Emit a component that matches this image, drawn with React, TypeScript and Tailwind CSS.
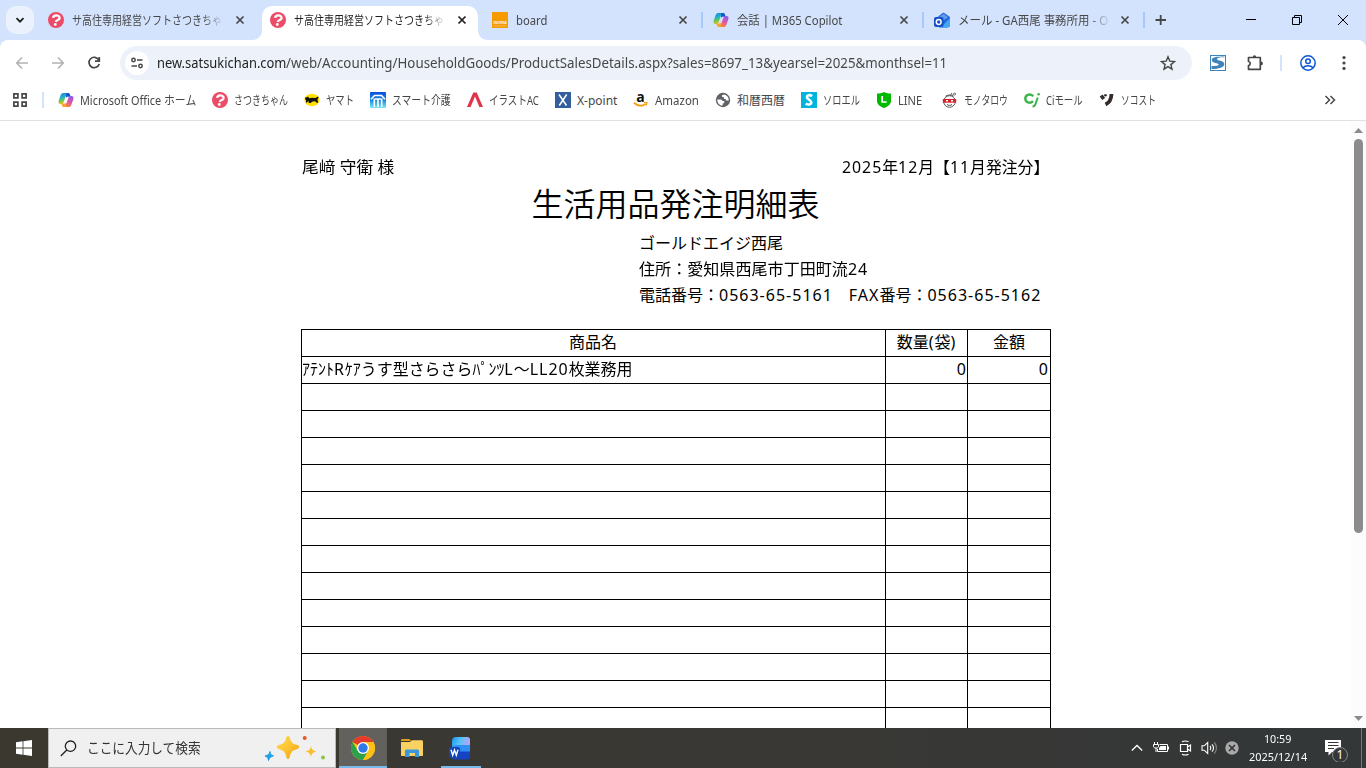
import { useLayoutEffect, useRef, useState, type ReactNode } from "react";

type FitProps = { children: ReactNode; className?: string };

// Condenses or stretches a single line of text to the width of its box
const FitText = ({ children, className = "" }: FitProps) => {
    const box = useRef<HTMLSpanElement>(null);
    const inner = useRef<HTMLSpanElement>(null);
    const [scale, setScale] = useState(1);

    useLayoutEffect(() => {
        if (!box.current || !inner.current) return;
        setScale(box.current.clientWidth / inner.current.offsetWidth);
    }, []);

    return (
        <span ref={box} className={`block shrink-0 whitespace-pre ${className}`}>
            <span ref={inner} className="inline-block origin-left" style={{ transform: `scaleX(${scale})` }}>
                {children}
            </span>
        </span>
    );
};

// Digits and Latin letters inside the Japanese sheet
const Latin = ({ children }: { children: ReactNode }) => <span className="tracking-[1px]">{children}</span>;

const SatsukiIcon = () => (
    <svg className="size-4 shrink-0" viewBox="0 0 16 16">
        <circle cx="8" cy="8" r="8" fill="#ee4b67" />
        <path d="M4.800 6.400C4.600 2.400 11.200 2.400 11.200 5.600c0 2.200-2.900 2-3.200 4.400" fill="none" stroke="#fff" strokeWidth="2.300" transform="rotate(10 8 8)" />
        <circle cx="7.300" cy="12.500" r="1.400" fill="#fff" />
    </svg>
);

const CopilotIcon = () => (
    <svg className="size-4 shrink-0" viewBox="0 0 16 16">
        <defs>
            <linearGradient id="cpA" x1="0" y1="0" x2="0.3" y2="1">
                <stop offset="0" stopColor="#1b7fe0" />
                <stop offset="0.45" stopColor="#22b3c9" />
                <stop offset="0.75" stopColor="#7ac943" />
                <stop offset="1" stopColor="#f2c01f" />
            </linearGradient>
            <linearGradient id="cpB" x1="0.7" y1="0" x2="0.3" y2="1">
                <stop offset="0" stopColor="#8a5cf0" />
                <stop offset="0.5" stopColor="#e0589f" />
                <stop offset="1" stopColor="#fb8a3c" />
            </linearGradient>
        </defs>
        <path d="M10.500 1H5.200C3.800 1 3 2.200 2.500 3.600L.6 9c-.5 1.700.4 3 1.900 3h2.400L7.500 5c.5-1.300 1-1.700 2.200-1.700h1.900z" fill="url(#cpA)" />
        <path d="M8.200 1h2c1 0 1.500.8 1.800 1.800l.7 2H9.700c-1 0-1.400.5-1.700 1.500z" fill="#1557c8" />
        <path d="M5.500 15h5.300c1.400 0 2.200-1.200 2.700-2.600l1.900-5.400c.5-1.700-.4-3-1.900-3h-2.400L8.500 11c-.5 1.300-1 1.700-2.200 1.700H4.400z" fill="url(#cpB)" />
        <path d="M7.800 15H5.700c-1 0-1.500-.8-1.800-1.800l-.6-1.700h3c1 0 1.400-.5 1.700-1.500z" fill="#f6a52d" />
    </svg>
);

const BoardIcon = () => (
    <svg className="size-4 shrink-0" viewBox="0 0 16 16">
        <rect width="16" height="16" fill="#f59a00" />
        <text x="1.500" y="11.800" fontSize="4.600" fontWeight="700" fill="#fff" fontFamily="Liberation Sans, sans-serif" textLength="13" lengthAdjust="spacingAndGlyphs">norma</text>
        <path d="M1.500 14h13" stroke="#f9c46b" strokeWidth=".8" />
    </svg>
);

const OutlookIcon = () => (
    <svg className="size-4 shrink-0" viewBox="0 0 16 16">
        <path d="M3 5.500 8.300 1.200c.8-.6 1.500-.6 2.300 0L15 4.300c.7.5 1 1 1 1.800V13c0 1.600-.9 2.500-2.500 2.500H5z" fill="#2563dd" />
        <path d="M4.500 5.500 9.500 1.700l4.800 3.500-5 3.200z" fill="#5d9bf2" />
        <path d="M16 6v7c0 1.600-.9 2.500-2.500 2.500H7z" fill="#3fa9f5" />
        <rect y="5" width="9.500" height="10" rx="2" fill="#1250c4" />
        <circle cx="4.700" cy="10" r="2.400" fill="none" stroke="#fff" strokeWidth="1.500" />
    </svg>
);

const YamatoIcon = () => (
    <svg className="size-4 shrink-0" viewBox="0 0 16 16">
        <ellipse cx="8" cy="8" rx="7.600" ry="6.200" fill="#ffe100" />
        <path d="M1.300 5 2.500 5.600 4 4.600l1.300 1.700 2.700-.6 3.500.3L14 4.600l.6 1-1.200 1.900.8 3.300h-1.500l-1.400-1.500-2.800.3L6.500 11H4.500l.5-1.300L4 9.300 2.800 10.700l-1-.5.4-1.700-1-1.300z" fill="#111" />
    </svg>
);

const SmartIcon = () => (
    <svg className="size-4 shrink-0" viewBox="0 0 16 16">
        <defs>
            <linearGradient id="smart" x1="0" y1="0" x2="0" y2="1">
                <stop offset="0" stopColor="#0a50d8" />
                <stop offset="0.5" stopColor="#1787e0" />
                <stop offset="1" stopColor="#7be8f5" />
            </linearGradient>
        </defs>
        <rect width="16" height="16" rx="1" fill="url(#smart)" />
        <path d="M1 7.300 4.500 3.500h7L15 7.300M4.300 6.500v8.500M11.700 6.500v8.500M5 7h6M8 7v8" fill="none" stroke="#fff" strokeWidth="1.600" />
    </svg>
);

const IllustIcon = () => (
    <svg className="size-4 shrink-0" viewBox="0 0 16 16">
        <path d="M6.300.5h3.400L16 15h-3.600L8 4.500 3.600 15H0z" fill="#e0344e" />
    </svg>
);

const XPointIcon = () => (
    <svg className="size-4 shrink-0" viewBox="0 0 16 16">
        <rect width="16" height="16" fill="#355f9c" />
        <path d="m4 2.500 7.500 11M11.700 2.500 4.300 13.500" stroke="#fff" strokeWidth="1.500" />
    </svg>
);

const AmazonIcon = () => (
    <svg className="size-4 shrink-0 overflow-visible" viewBox="0 0 16 16">
        <text x="3.200" y="9.500" fontSize="14" fontWeight="700" fill="#111" fontFamily="Open Sans, sans-serif">a</text>
        <path d="M1 10.800c3.500 3.400 8 3.500 11.700 1.200" fill="none" stroke="#f6a01c" strokeWidth="1.900" />
        <path d="M11 10.600h3l-.7 2.800" fill="none" stroke="#f6a01c" strokeWidth="1.200" />
    </svg>
);

const GlobeIcon = () => (
    <svg className="size-4 shrink-0" viewBox="0 0 16 16">
        <circle cx="8" cy="8" r="7.200" fill="#5f6368" />
        <path d="M2.200 7.500h3.600c1.200 0 1.300 1.400 2.200 1.400h1.200v2.400H7.800v1.800l-1.200.6C4 12.900 2 10.500 2.200 7.500zM9.500 2.500 7 3.200v1.600l2 .6v1.500l1.800.1v1.600h3C14 6 12.300 3.200 9.500 2.500z" fill="#fff" />
    </svg>
);

const SoloelIcon = () => (
    <svg className="size-4 shrink-0" viewBox="0 0 16 16">
        <rect width="16" height="16" fill="#00b4dc" />
        <path d="M11 4.200C9 2.500 6 3 6 5.200c0 2.500 4.500 2.700 4.300 5.300-.2 2.300-3.500 2.600-5.600 1" fill="none" stroke="#fff" strokeWidth="2.600" />
    </svg>
);

const LineIcon = () => (
    <svg className="size-4 shrink-0" viewBox="0 0 16 16">
        <path d="M8 0c2 1 4.500 1.500 7 1.500V9c0 3.500-3 5.500-7 7-4-1.500-7-3.500-7-7V1.500C3.500 1.500 6 1 8 0z" fill="#00b900" />
        <path d="M6.200 4v6h4.500" fill="none" stroke="#fff" strokeWidth="1.700" />
    </svg>
);

const MonotaroIcon = () => (
    <svg className="size-4 shrink-0" viewBox="0 0 16 16">
        <circle cx="7.500" cy="9.500" r="5.800" fill="#fff" stroke="#444" strokeWidth=".9" />
        <path d="M3.500 4.200c2-1.500 6-1.500 8 0M8.500 3 10 1M10.500 3.300 12.500.8l1.200 1.200-1.700 1.700" fill="none" stroke="#444" strokeWidth=".9" />
        <path d="M.8 7h13.400v3.700H.8z" fill="#d6222d" />
        <path d="M4 8.800h2M9 8.800h2" stroke="#fff" strokeWidth="1.400" />
        <path d="M5 12.500c1.500 1.200 3.500 1.200 5 0" fill="none" stroke="#444" />
    </svg>
);

const CiIcon = () => (
    <svg className="size-4 shrink-0" viewBox="0 0 16 16">
        <path d="M9.300 4.200C5.500.8 1.300 3 1.300 6.600c0 3.800 4.500 5.600 7.700 2.600" fill="none" stroke="#3bb54a" strokeWidth="2.400" />
        <path d="M13.700 5.500 11.500 12c-.5 1.500-1.300 2.500-3 2.500" fill="none" stroke="#3bb54a" strokeWidth="2" />
        <circle cx="14.600" cy="2.300" r="1.300" fill="#3bb54a" />
    </svg>
);

const SocostIcon = () => (
    <svg className="size-4 shrink-0" viewBox="0 0 16 16">
        <path d="m2.200 3.500 2.500 3.500" stroke="#332c2a" strokeWidth="3.600" />
        <circle cx="6.500" cy="3.200" r="1.300" fill="#332c2a" />
        <path d="M12.500 2c-.2 5-1.800 8.500-6 10.500" fill="none" stroke="#332c2a" strokeWidth="3.800" />
    </svg>
);

const CloseGlyph = () => (
    <svg className="size-4 shrink-0" viewBox="0 0 16 16">
        <path d="m4.500 4.500 7 7m0-7-7 7" stroke="currentColor" strokeWidth="1.700" />
    </svg>
);

type TabProps = {
    icon: ReactNode;
    title: string;
    width: string;
    textWidth: string;
    active?: boolean;
    divider?: boolean;
    fade?: boolean;
};

const Tab = ({ icon, title, width, textWidth, active, divider, fade }: TabProps) => (
    <div className={`relative flex h-[34px] shrink-0 items-center pb-[6px] pl-2 ${width} ${active ? "text-[#1f1f1f]" : "text-[#474747]"}`}>
        {active && (
            <>
                <span className="absolute inset-y-0 left-0 right-[6px] rounded-t-[10px] bg-white" />
                <svg className="absolute -left-[10px] bottom-0 size-[10px]" viewBox="0 0 10 10">
                    <path d="M10 0v10H0C6 10 10 6 10 0z" fill="#fff" />
                </svg>
                <svg className="absolute -right-[4px] bottom-0 size-[10px]" viewBox="0 0 10 10">
                    <path d="M0 0v10h10C4 10 0 6 0 0z" fill="#fff" />
                </svg>
            </>
        )}
        <div className="relative flex items-center">
            {icon}
            <div className={`ml-2 w-[150px] overflow-hidden pt-[2px] ${fade ? "[mask-image:linear-gradient(to_right,black_130px,transparent_153px)]" : ""}`}>
                <FitText className={textWidth}>{title}</FitText>
            </div>
            <span className={`flex ${divider ? "ml-[9px]" : "ml-[10px]"}`}>
                <CloseGlyph />
            </span>
        </div>
        {divider && <span className="absolute right-[2px] top-[6px] h-4 w-[2px] bg-[#a8c7fa]" />}
    </div>
);

const TabStrip = () => (
    <div className="flex h-10 items-start bg-[#d3e3fd] pt-[6px] text-[12px] leading-[18px]">
        <div className="ml-[6px] mr-[6px] flex size-7 shrink-0 items-center justify-center rounded-[10px] bg-[#ebf2fe]">
            <svg className="size-3" viewBox="0 0 12 12">
                <path d="m2.500 4.200 3.500 3.500 3.500-3.500" fill="none" stroke="#1f1f1f" strokeWidth="1.800" />
            </svg>
        </div>
        <Tab icon={<SatsukiIcon />} title="サ高住専用経営ソフトさつきちゃ" width="w-[222px]" textWidth="w-[150px]" fade />
        <Tab icon={<SatsukiIcon />} title="サ高住専用経営ソフトさつきちゃ" width="w-[222px]" textWidth="w-[150px]" active fade />
        <Tab icon={<BoardIcon />} title="board" width="w-[221px]" textWidth="w-[31px]" divider />
        <Tab icon={<CopilotIcon />} title="会話 | M365 Copilot" width="w-[221px]" textWidth="w-[105px]" divider />
        <Tab icon={<OutlookIcon />} title="メール - GA西尾 事務所用 - O" width="w-[221px]" textWidth="w-[150px]" divider fade />
        <svg className="ml-[6px] mt-[6px] size-4 shrink-0" viewBox="0 0 16 16">
            <path d="M2.500 8H13M7.700 3v10" stroke="#474747" strokeWidth="1.800" />
        </svg>
        <div className="ml-auto mr-[17px] mt-2 flex gap-[34px] text-black">
            <svg className="size-3" viewBox="0 0 12 12">
                <path d="M1 5.500h10" stroke="currentColor" />
            </svg>
            <svg className="size-3" viewBox="0 0 12 12">
                <path d="M1.500 3.500h7v7h-7zM3.500 3.500v-2h7v7h-2" fill="none" stroke="currentColor" />
            </svg>
            <svg className="size-3" viewBox="0 0 12 12">
                <path d="m1 1 10 10m0-10L1 11" stroke="currentColor" />
            </svg>
        </div>
    </div>
);

const Toolbar = () => (
    <div className="bg-[#d3e3fd]">
        <div className="flex h-[46px] items-center rounded-t-[8px] bg-white text-[#474747]">
            <svg className="ml-[14px] size-4" viewBox="0 0 16 16">
                <path d="M14 8H3m5-5.500L2.700 8 8 13.500" fill="none" stroke="#b3b3b3" strokeWidth="1.600" />
            </svg>
            <svg className="ml-5 size-4" viewBox="0 0 16 16">
                <path d="M2 8h11M8 2.500 13.300 8 8 13.500" fill="none" stroke="#b3b3b3" strokeWidth="1.600" />
            </svg>
            <svg className="ml-5 size-4" viewBox="0 0 16 16">
                <path d="M12.700 4.800A5.200 5.200 0 1 0 13.200 9M13.300 2v4.200H9" fill="none" stroke="currentColor" strokeWidth="1.700" />
            </svg>
            <div className="ml-[18px] flex h-[34px] w-[1072px] shrink-0 items-center rounded-full bg-[#ecf1fa] pl-[5px] pr-4">
                <span className="flex size-6 items-center justify-center rounded-full bg-white">
                    <svg className="size-[14px]" viewBox="0 0 14 14">
                        <path d="M7 4h5.500M1.500 10H7" stroke="currentColor" strokeWidth="1.500" />
                        <circle cx="3.500" cy="4" r="1.700" fill="none" stroke="currentColor" strokeWidth="1.500" />
                        <circle cx="10.500" cy="10" r="1.700" fill="none" stroke="currentColor" strokeWidth="1.500" />
                    </svg>
                </span>
                <div className="ml-2 flex text-[14px] leading-5">
                    <FitText className="w-[129px] text-[#1f1f1f]">new.satsukichan.com</FitText>
                    <FitText className="w-[661px]">
                        {"/web/Accounting/HouseholdGoods/ProductSalesDetails.aspx?sales=8697_13&yearsel=2025&monthsel=11"}
                    </FitText>
                </div>
                <svg className="ml-auto size-4" viewBox="0 0 16 16">
                    <path d="m8 1.800 1.800 4.300 4.700.4-3.600 3.100 1.100 4.600L8 11.700l-4 2.500 1.100-4.600-3.600-3.100 4.700-.4z" fill="none" stroke="currentColor" strokeWidth="1.400" />
                </svg>
            </div>
            <svg className="ml-[18px] size-4" viewBox="0 0 16 16">
                <rect x=".5" y=".5" width="15" height="15" fill="#fff" stroke="#3f83b8" />
                <path d="M14.500 2.200C9 2.200 7 2.800 7 4.300c0 1.700 7.300 1 7.300 4.700 0 3.500-5 5-12.800 5v-3c4.500 0 7.200-.2 7.200-1.500C8.700 7.800 1.800 8.500 1.800 5 1.800 2.200 6 1.500 14.500 1.500z" fill="#3f83b8" />
            </svg>
            <svg className="ml-[20px] size-[18px]" viewBox="0 0 18 18">
                <path d="M2.500 3.500h11.800v11.800H2.500V11.500c2.300-.3 2.300-3.700 0-4z" fill="none" stroke="currentColor" strokeWidth="1.700" strokeLinejoin="round" />
                <path d="M6.800 3a1.700 1.700 0 0 1 3.400 0zM15 7.500a1.900 1.900 0 0 1 0 3.800z" fill="currentColor" />
            </svg>
            <span className="ml-4 h-4 w-[2px] bg-[#d3e3fd]" />
            <svg className="ml-[18px] size-4" viewBox="0 0 16 16" fill="none" stroke="#0b57d0" strokeWidth="1.500">
                <circle cx="8" cy="8" r="7.200" />
                <circle cx="8" cy="6.300" r="2.300" />
                <path d="M3 12.800c2.500-2.800 7.500-2.800 10 0" />
            </svg>
            <svg className="ml-5 size-4" viewBox="0 0 16 16" fill="currentColor">
                <circle cx="8" cy="2.600" r="1.600" />
                <circle cx="8" cy="8" r="1.600" />
                <circle cx="8" cy="13.400" r="1.600" />
            </svg>
        </div>
    </div>
);

const bookmarks = [
    { icon: <CopilotIcon />, label: "Microsoft Office ホーム", width: "w-[116px]" },
    { icon: <SatsukiIcon />, label: "さつきちゃん", width: "w-[54px]" },
    { icon: <YamatoIcon />, label: "ヤマト", width: "w-[28px]" },
    { icon: <SmartIcon />, label: "スマート介護", width: "w-[59px]" },
    { icon: <IllustIcon />, label: "イラストAC", width: "w-[50px]" },
    { icon: <XPointIcon />, label: "X-point", width: "w-[40px]" },
    { icon: <AmazonIcon />, label: "Amazon", width: "w-[44px]" },
    { icon: <GlobeIcon />, label: "和暦西暦", width: "w-[48px]" },
    { icon: <SoloelIcon />, label: "ソロエル", width: "w-[37px]" },
    { icon: <LineIcon />, label: "LINE", width: "w-[24px] mr-1" },
    { icon: <MonotaroIcon />, label: "モノタロウ", width: "w-[44px]" },
    { icon: <CiIcon />, label: "Ciモール", width: "w-[37px]" },
    { icon: <SocostIcon />, label: "ソコスト", width: "w-[35px]" },
];

const BookmarkBar = () => (
    <div className="flex h-[35px] items-center border-b border-[#dfe1e5] bg-white pb-[6px] text-[12px] leading-[18px] text-[#474747]">
        <svg className="ml-3 size-4 shrink-0" viewBox="0 0 16 16" fill="none" stroke="currentColor" strokeWidth="1.700">
            <path d="M1.900 1.900h4v4h-4zM10.100 1.900h4v4h-4zM1.900 10.100h4v4h-4zM10.100 10.100h4v4h-4z" />
        </svg>
        <span className="ml-[14px] mr-[14px] h-4 w-[2px] shrink-0 bg-[#d3e3fd]" />
        <div className="flex gap-4">
            {bookmarks.map(({ icon, label, width }) => (
                <div key={label} className="flex items-center gap-[6px]">
                    {icon}
                    <FitText className={`pt-[2px] ${width}`}>{label}</FitText>
                </div>
            ))}
        </div>
        <svg className="ml-auto mr-7 size-4" viewBox="0 0 16 16" fill="none" stroke="currentColor" strokeWidth="1.500">
            <path d="m3.500 4 4 4-4 4M8.500 4l4 4-4 4" />
        </svg>
    </div>
);

const rows = [
    {
        name: (
            <>
                ｱﾃﾝﾄ<Latin>R</Latin>ｹｱうす型さらさらﾊﾟﾝﾂ<Latin>L</Latin>～<Latin>LL20</Latin>枚業務用
            </>
        ),
        count: "0",
        amount: "0",
    },
    ...Array.from({ length: 13 }, () => ({ name: null, count: "", amount: "" })),
];

const OrderSheet = () => (
    <main className="flex h-[607px] overflow-hidden bg-white text-[16px] leading-[26px] text-black">
        <div className="flex-1">
            <div className="ml-[301px] w-[750px] pt-[33px]">
                <div className="flex justify-between pl-px pr-[2px]">
                    <FitText className="w-[92px]">尾﨑 守衛 様</FitText>
                    <FitText className="w-[207px]">
                        <Latin>2025</Latin>年<Latin>12</Latin>月【<Latin>11</Latin>月発注分】
                    </FitText>
                </div>
                <h1 className="pr-px text-center text-[32px] leading-[48px] font-[350]">生活用品発注明細表</h1>
                <div className="ml-[338px] mt-[2px]">
                    <FitText className="w-[144px]">ゴールドエイジ西尾</FitText>
                    <FitText className="w-[229px]">
                        住所：愛知県西尾市丁田町流<Latin>24</Latin>
                    </FitText>
                    <FitText className="w-[402px]">
                        電話番号：<Latin>0563-65-5161</Latin>　<Latin>FAX</Latin>番号：<Latin>0563-65-5162</Latin>
                    </FitText>
                </div>
                <table className="mt-[21px] w-[750px] table-fixed border-collapse leading-6">
                    <colgroup>
                        <col className="w-[584px]" />
                        <col className="w-[82px]" />
                        <col className="w-[83px]" />
                    </colgroup>
                    <thead>
                        <tr className="h-[27px]">
                            <th className="border border-black p-0 pb-[2px] pr-px font-normal">商品名</th>
                            <th className="border border-black p-0 pb-[2px] font-normal">
                                数量<Latin>(</Latin>袋<Latin>)</Latin>
                            </th>
                            <th className="border border-black p-0 pb-[2px] font-normal">金額</th>
                        </tr>
                    </thead>
                    <tbody>
                        {rows.map((row, i) => (
                            <tr key={i} className="h-[27px]">
                                <td className="border border-black p-0 pb-[2px]">
                                    {row.name && <FitText className="w-[330px]">{row.name}</FitText>}
                                </td>
                                <td className="border border-black p-0 pb-[2px] text-right"><Latin>{row.count}</Latin></td>
                                <td className="border border-black p-0 pb-[2px] pr-px text-right"><Latin>{row.amount}</Latin></td>
                            </tr>
                        ))}
                    </tbody>
                </table>
            </div>
        </div>
        <div className="flex w-[15px] flex-col items-center bg-[#fcfcfc] pb-[7px] pt-[7px]">
            <svg className="h-[5px] w-[9px] shrink-0" viewBox="0 0 9 5">
                <path d="M0 5 4.500 0 9 5z" fill="#8b8b8b" />
            </svg>
            <div className="mt-[6px] h-[394px] w-[9px] shrink-0 rounded-full bg-[#8b8b8b]" />
            <svg className="mt-auto h-[5px] w-[9px] shrink-0" viewBox="0 0 9 5">
                <path d="m0 0 4.500 5L9 0z" fill="#8b8b8b" />
            </svg>
        </div>
    </main>
);

const ChromeIcon = () => (
    <svg className="size-6" viewBox="0 0 24 24">
        <circle cx="12" cy="12" r="12" fill="#fbc116" />
        <path d="M12 12 1.600 6A12 12 0 0 1 22.400 6z" fill="#e33b2e" />
        <path d="M1.600 6A12 12 0 0 0 12 24l5.200-9L12 12 6.800 15z" fill="#2da04c" />
        <path d="M12 6h10.400A12 12 0 0 1 12 24l5.200-9z" fill="#fbc116" />
        <circle cx="12" cy="12" r="6" fill="#fff" />
        <circle cx="12" cy="12" r="4.700" fill="#2f78ea" />
    </svg>
);

const ExplorerIcon = () => (
    <svg className="h-[18px] w-[22px]" viewBox="0 0 22 18">
        <path d="M0 1.500C0 .6.500 0 1.300 0h7l2 2H0z" fill="#e1a01a" />
        <path d="M0 3h9l2-1.700h9.500c.8 0 1.500.5 1.500 1.400V16c0 .6-.4 1-1 1H1c-.6 0-1-.4-1-1z" fill="#fbd162" />
        <path d="M4 18v-6c0-1 .6-1.500 1.500-1.500h11c.9 0 1.500.5 1.500 1.500v6h-4v-4H8.500v4z" fill="#3b97dc" />
    </svg>
);

const WordIcon = () => (
    <svg className="h-6 w-[22px]" viewBox="0 0 22 24">
        <defs>
            <linearGradient id="word" x1="0" y1="0" x2="1" y2="0.300">
                <stop offset="0" stopColor="#1c8ff0" />
                <stop offset="0.500" stopColor="#52c5fb" />
                <stop offset="1" stopColor="#b7a5fa" />
            </linearGradient>
        </defs>
        <path d="M4 15h18v6c0 1.500-1 2.500-2.500 2.500h-13C5 23.500 4 22.500 4 21z" fill="#1543c4" />
        <path d="M4 9h18v6.500H7.500C5.500 15.500 4 16.500 4 18z" fill="#2f8ff5" />
        <path d="M4 5c0-2.500 1.500-4 4-4h11.500C21 1 22 2 22 3.500V9H8c-2.500 0-4 1-4 2.500z" fill="url(#word)" />
        <rect x="1" y="11" width="11" height="11" rx="2" fill="#1245b5" />
        <path d="m3 13.700 1.700 5.600L6.500 14l1.800 5.300L10 13.700" fill="none" stroke="#fff" strokeWidth="1.400" />
    </svg>
);

const SparkleArt = () => (
    <svg className="h-7 w-[62px]" viewBox="0 0 62 28">
        <defs>
            <linearGradient id="spark" x1="0" y1="0" x2="1" y2="1">
                <stop offset="0" stopColor="#ffdc55" />
                <stop offset="0.550" stopColor="#fbc02d" />
                <stop offset="1" stopColor="#ec9b16" />
            </linearGradient>
        </defs>
        <path d="M24 2c1.200 0 1.800 1 2.300 3 .9 3.300 2 4.500 5.500 5.600 2.500.8 3.500 1.300 3.500 2.400s-1 1.700-3.500 2.400c-3.500 1.100-4.600 2.300-5.500 5.600-.5 2-1.100 4-2.300 4s-1.800-2-2.300-4c-.9-3.300-2-4.500-5.500-5.600-2.500-.7-3.500-1.300-3.500-2.400s1-1.600 3.500-2.400c3.500-1.100 4.600-2.300 5.500-5.600.5-2 1.100-3 2.300-3z" fill="url(#spark)" />
        <path d="M47 12c.8 3.500 1.500 4.300 5.300 5.500-3.800 1.200-4.500 2-5.300 5.500-.8-3.500-1.500-4.300-5.300-5.500 3.800-1.200 4.500-2 5.300-5.500z" fill="#fbbd2b" />
        <path d="M6 17.500c.2 3 1 3.500 3.500 4.300C7 22.800 5.500 23.500 4.500 26.500 4 23.500 3.200 23 1 22c3-.8 4.200-1.500 5-4.500z" fill="#1ba1e6" stroke="#1ba1e6" />
        <circle cx="40.700" cy="4" r="2" fill="#e8572c" />
        <circle cx="59" cy="23.500" r="2" fill="#8bc53f" />
    </svg>
);

const Taskbar = () => (
    <footer className="flex h-10 bg-gradient-to-r from-[#3b382f] via-[#3a3834] to-[#333738] text-white">
        <div className="flex w-12 items-center justify-center">
            <svg className="size-4" viewBox="0 0 16 16" fill="#fff">
                <path d="M0 2.200 6.600 1.300v6.300H0zM7.400 1.200 16 0v7.600H7.400zM0 8.400h6.600v6.300L0 13.800zM7.400 8.400H16V16l-8.600-1.200z" />
            </svg>
        </div>
        <div className="flex w-72 items-center border border-[#b9b9b9] bg-[#f0f0f0] pl-[11px] pr-[9px] text-[#333]">
            <svg className="size-[17px]" viewBox="0 0 17 17" fill="none" stroke="#222" strokeWidth="1.300">
                <circle cx="10.500" cy="6.200" r="5.200" />
                <path d="M6.800 10 .8 16" />
            </svg>
            <FitText className="ml-[10px] w-[114px] text-[14px] leading-5">ここに入力して検索</FitText>
            <span className="ml-auto">
                <SparkleArt />
            </span>
        </div>
        <div className="ml-[3px] flex w-12 items-center justify-center border-b-2 border-[#76b9ed] bg-[#62615d] pt-[2px]">
            <ChromeIcon />
        </div>
        <div className="flex w-[50px] items-center justify-center">
            <ExplorerIcon />
        </div>
        <div className="ml-1 flex w-10 items-center justify-center border-b-2 border-[#76b9ed] pr-1 pt-[2px]">
            <WordIcon />
        </div>
        <div className="ml-auto flex items-center">
            <svg className="size-3 shrink-0" viewBox="0 0 12 12">
                <path d="m.8 8.500 5.200-5 5.200 5" fill="none" stroke="#fff" strokeWidth="1.300" />
            </svg>
            <svg className="ml-[10px] h-3 w-4 shrink-0" viewBox="0 0 16 12" fill="none" stroke="#fff">
                <path d="M6.500 2.500h8v7h-10V7M15.500 4.500v3M.5 2.500h5v2c0 1-1 1.500-2.500 1.500S.5 5.500.5 4.500zM1.500 0v2M4.500 0v2M3 6v4" />
                <path d="M7.500 4h5.500v4H6V6z" fill="#fff" stroke="none" />
            </svg>
            <svg className="ml-[10px] h-4 w-[13px] shrink-0" viewBox="0 0 13 16" fill="none" stroke="#fff">
                <path d="M1.500 4.500h7v7h-7zM8.500 7l3-2v6l-3-2M3 1.800c2-1 4.500-1 6.500 0M3 14.200c2 1 4.500 1 6.500 0" strokeWidth="1.200" />
            </svg>
            <svg className="ml-[9px] h-[14px] w-[17px] shrink-0" viewBox="0 0 17 14" fill="none" stroke="#fff" strokeWidth="1.100">
                <path d="M1 4.800h2.200L6.700 1.500v11L3.200 9.200H1zM9 5c1 1 1 3 0 4M11 3.300c2 2 2 5.400 0 7.400" />
                <path d="M13.200 1.500c3 3 3 8 0 11" stroke="#888" />
            </svg>
            <svg className="ml-[7px] size-[14px] shrink-0" viewBox="0 0 14 14">
                <circle cx="7" cy="7" r="6.700" fill="#a9a9a9" />
                <path d="m4 4 6 6m0-6-6 6" stroke="#333" strokeWidth="1.600" />
            </svg>
            <div className="ml-[10px] flex w-[58px] flex-col items-center pb-px text-[11.500px] leading-[18px]">
                <FitText className="mr-px w-[27px]">10:59</FitText>
                <FitText className="w-[58px]">2025/12/14</FitText>
            </div>
            <svg className="ml-[17px] h-7 w-6 shrink-0" viewBox="0 0 24 28">
                <path d="M1 6h16v12H8l-3.500 3.500V18H1z" fill="#fff" />
                <path d="M4 8.500h10.500M4 11.500h10.500M4 14.500h6" stroke="#333" />
                <circle cx="16" cy="21" r="7.500" fill="#34373a" stroke="#888" />
                <text x="16" y="25.200" textAnchor="middle" fontSize="12" fill="#fff" fontFamily="Noto Sans, sans-serif">1</text>
            </svg>
            <span className="ml-[13px] mr-1 h-10 w-px bg-[#777]" />
        </div>
    </footer>
);

const App = () => {
    return (
        <div className="h-[768px] w-[1366px] overflow-hidden bg-white font-['Noto_Sans','Noto_Sans_CJK_JP',sans-serif]">
            <TabStrip />
            <Toolbar />
            <BookmarkBar />
            <OrderSheet />
            <Taskbar />
        </div>
    );
};

export default App;
